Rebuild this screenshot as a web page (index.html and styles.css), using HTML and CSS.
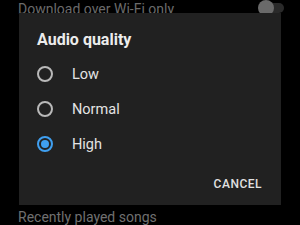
FILE: index.html
```html
<!DOCTYPE html>
<html>
<head>
<meta charset="utf-8">
<link rel="stylesheet" href="styles.css">
</head>
<body>
<div class="screen">
  <div class="settings">
    <div class="row top-row">
      <span class="label">Download over Wi-Fi only</span>
      <span class="toggle"><span class="track"></span><span class="knob"></span></span>
    </div>
    <div class="spacer"></div>
    <div class="row bottom-row"><span class="label">Recently played songs</span></div>
  </div>
  <div class="dialog">
    <div class="title">Audio quality</div>
    <div class="options">
      <div class="option"><span class="radio"></span><span class="opt-label">Low</span></div>
      <div class="option"><span class="radio"></span><span class="opt-label">Normal</span></div>
      <div class="option"><span class="radio checked"></span><span class="opt-label">High</span></div>
    </div>
    <div class="actions"><span class="btn">CANCEL</span></div>
  </div>
</div>
</body>
</html>
```
FILE: styles.css
```css
html, body {
  margin: 0;
  padding: 0;
  background: #000;
}
.screen {
  position: relative;
  width: 300px;
  height: 225px;
  overflow: hidden;
  font-family: Roboto, "Noto Sans", sans-serif;
}
.settings {
  display: flex;
  flex-direction: column;
  padding: 0 18px;
}
.row {
  display: flex;
  align-items: center;
  justify-content: space-between;
}
.label {
  font-size: 14px;
  color: #6b6b6b;
}
.top-row {
  height: 18px;
}
.toggle {
  position: relative;
  width: 26px;
  height: 16px;
  margin-right: -2px;
  margin-top: -2px;
}
.track {
  position: absolute;
  left: 6px;
  top: 3px;
  width: 20px;
  height: 10px;
  border-radius: 5px;
  background: #2a2a2a;
}
.knob {
  position: absolute;
  left: 0;
  top: 0;
  width: 16px;
  height: 16px;
  border-radius: 50%;
  background: #6a6a6a;
}
.spacer { height: 189px; }
.bottom-row {
  height: 20px;
}
.bottom-row .label {
  font-size: 14px;
  color: #707070;
}
.dialog {
  position: absolute;
  left: 19px;
  top: 13px;
  width: 262px;
  height: 192px;
  box-sizing: border-box;
  background: #212121;
  padding: 17px 19px 13px 18px;
  display: flex;
  flex-direction: column;
}
.title {
  font-size: 16px;
  line-height: 20px;
  font-weight: 700;
  color: #ececec;
}
.options {
  display: flex;
  flex-direction: column;
  margin-top: 6.5px;
}
.option {
  height: 35px;
  display: flex;
  align-items: center;
}
.radio {
  width: 16px;
  height: 16px;
  box-sizing: border-box;
  border: 2px solid #b9b9b9;
  border-radius: 50%;
  position: relative;
  flex: none;
}
.radio.checked {
  border-color: #3f9ff0;
}
.radio.checked::after {
  content: "";
  position: absolute;
  left: 2px;
  top: 2px;
  width: 8px;
  height: 8px;
  border-radius: 50%;
  background: #3f9ff0;
}
.opt-label {
  margin-left: 19px;
  font-size: 14.5px;
  color: #e4e4e4;
}
.actions {
  margin-top: auto;
  display: flex;
  justify-content: flex-end;
}
.btn {
  font-size: 12px;
  line-height: 16px;
  font-weight: 500;
  letter-spacing: 0.5px;
  color: #e0e0e0;
}
```
